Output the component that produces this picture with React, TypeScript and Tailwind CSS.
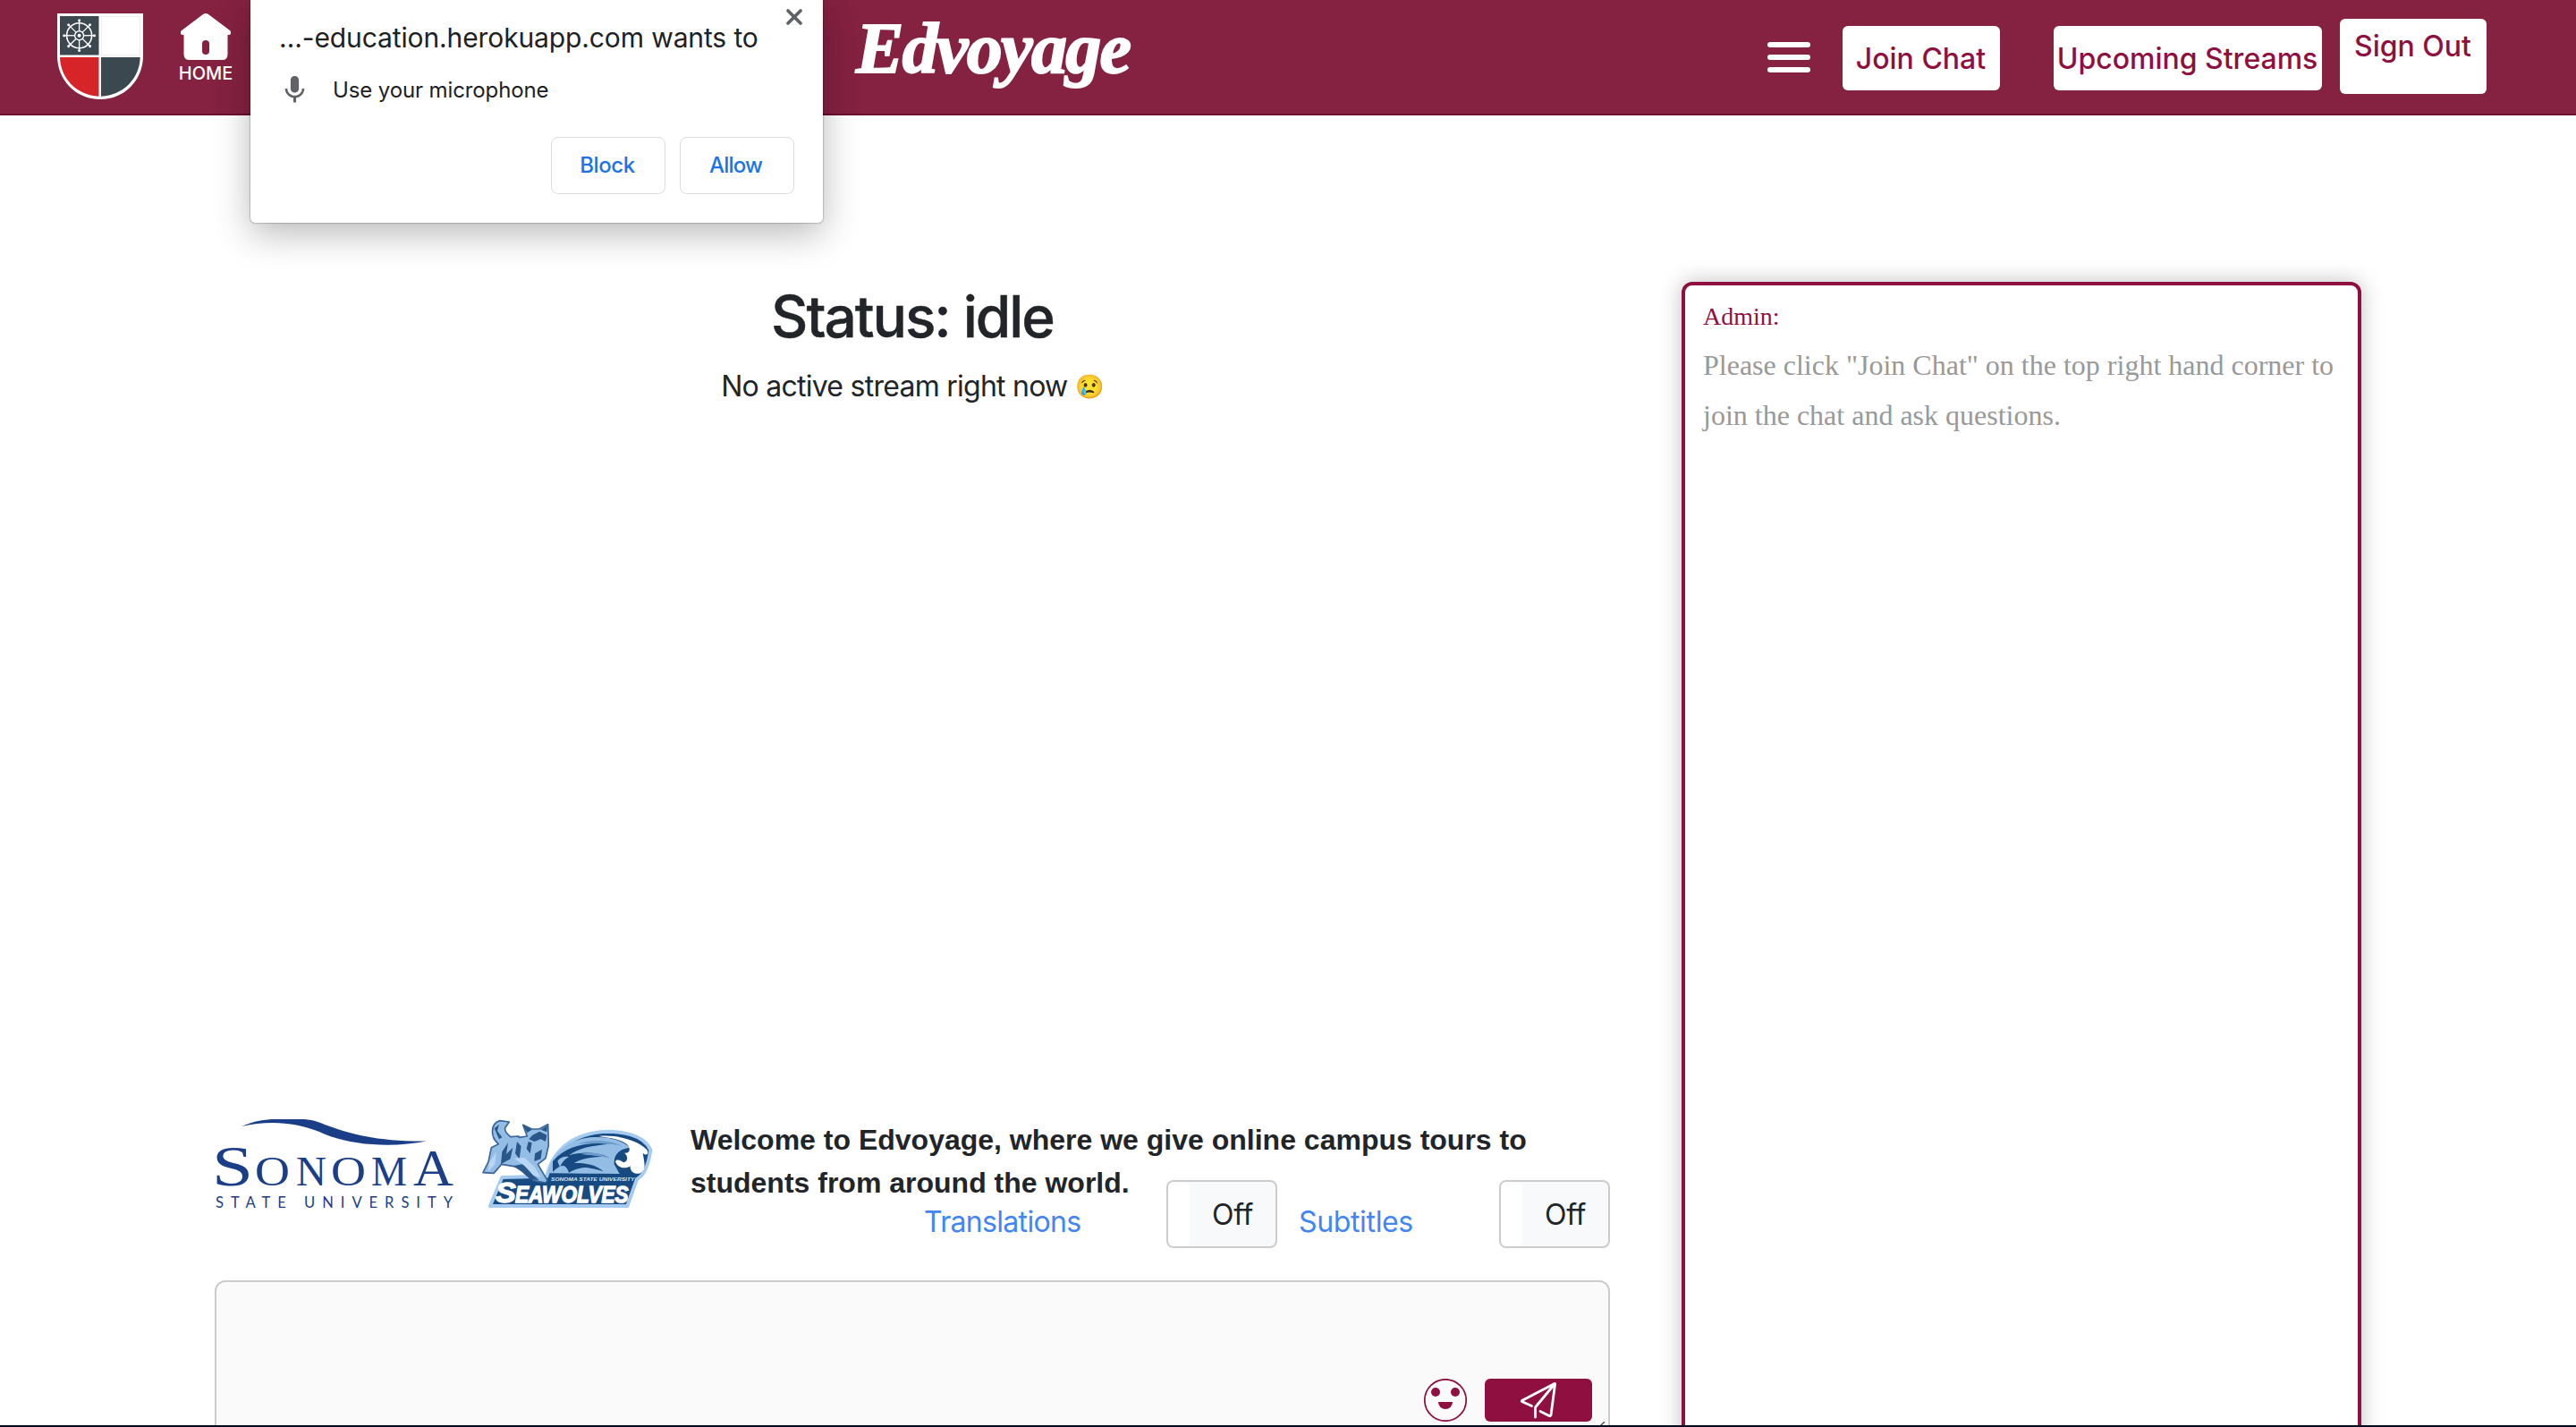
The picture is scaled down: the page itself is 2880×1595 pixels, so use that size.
import { X } from 'lucide-react';

function Shield() {
  const spokes = [0, 45, 90, 135, 180, 225, 270, 315];
  return (
    <svg className="mt-[15px] h-24 w-24 shrink-0" viewBox="64 15 96 96" role="img" aria-label="Edvoyage crest">
      <path d="M64 15H160V62C160 90 139 111 112 111C85 111 64 90 64 62Z" fill="#fff" />
      <rect x="67" y="18" width="43.5" height="43.5" fill="#3c4850" />
      <rect x="113.500" y="18.500" width="43" height="43" fill="none" stroke="#ececee" />
      <path d="M67 64H110.500V107.700C86 106.500 67.500 88 67 64Z" fill="#d62429" />
      <path d="M113 64H156.700C156.200 88 137.500 106.500 113 107.700Z" fill="#3c4850" />
      <g stroke="#fff" fill="none">
        <circle cx="88.600" cy="39.700" r="14" strokeWidth="1.600" />
        <circle cx="88.600" cy="39.700" r="5" strokeWidth="1.400" />
        {spokes.map((a) => (
          <g key={a} transform={`rotate(${a} 88.6 39.7)`}>
            <path d="M88.600 34.700V23" strokeWidth="1.300" />
            <circle cx="88.600" cy="22.800" r="1.500" fill="#fff" stroke="none" />
          </g>
        ))}
        <circle cx="88.600" cy="39.700" r="2" fill="#fff" stroke="none" />
      </g>
    </svg>
  );
}

function HomeIcon() {
  return (
    <svg className="h-[52px] w-[56px]" viewBox="202 15 56 52" aria-hidden="true">
      <path
        d="M227 16Q230 14 233 16L257.500 34.500Q258 35 258 36V37.500Q257.500 39 256 39H254.500V61Q254 67 249 67H211.500Q206 67 205.500 61V39H204Q202.500 39 202 37.500V36Q202 35 202.500 34.500Z"
        fill="#fff"
      />
      <rect x="226" y="45" width="8" height="16" rx="4" fill="#852141" />
    </svg>
  );
}

function PermissionPopup() {
  return (
    <div className="absolute left-[280px] top-0 z-10 h-[249px] w-[640px] rounded-b-[5px] bg-white pl-[31px] pr-8 pt-[22px] text-[#202124] shadow-[0_0_2px_rgba(0,0,0,0.6),0_12px_40px_rgba(0,0,0,0.28)]">
      <div className="ml-px whitespace-nowrap text-[30px] leading-10 tracking-[-0.12px]">…-education.herokuapp.com wants to</div>
      <div className="mt-[23px] flex h-8 items-center gap-[23px]">
        <svg className="-mt-px size-[37px]" viewBox="0 0 24 24" fill="#5f6368" aria-hidden="true">
          <path d="M12 14c1.660 0 2.990-1.340 2.990-3L15 5c0-1.660-1.340-3-3-3S9 3.340 9 5v6c0 1.660 1.340 3 3 3zm5.300-3c0 3-2.540 5.100-5.300 5.100S6.700 14 6.700 11H5c0 3.410 2.720 6.230 6 6.720V21h2v-3.280c3.280-.480 6-3.300 6-6.720h-1.700z" />
        </svg>
        <span className="ml-px text-2xl leading-8 tracking-[-0.12px]">Use your microphone</span>
      </div>
      <div className="mt-9 flex justify-end gap-4 text-2xl font-medium text-[#1a73e8]">
        <button className="h-16 w-32 rounded-lg border border-[#dadce0] pr-0.5 tracking-[-0.4px]">Block</button>
        <button className="h-16 w-32 rounded-lg border border-[#dadce0] pr-[3px] tracking-[-0.8px]">Allow</button>
      </div>
      <X className="absolute right-[18px] top-[5px] size-7 text-[#5f6368]" strokeWidth={3.2} />
    </div>
  );
}

function Header() {
  return (
    <header className="flex h-[129px] items-start border-b-2 border-[#6e0a30] bg-[#852141] pl-16 text-white">
      <Shield />
      <div className="ml-10 mt-[15px] flex w-[60px] flex-col items-center">
        <HomeIcon />
        <span className="mt-[3px] text-xl font-medium leading-6">HOME</span>
      </div>
      <h1 className="ml-[697px] mt-[14px] font-['Liberation_Serif',serif] text-[80px] font-bold italic leading-[80px] tracking-[-1.7px] [-webkit-text-stroke:2px_white]">
        Edvoyage
      </h1>
      <nav className="ml-auto mr-[100px] flex items-start text-[32px] font-medium text-[#8f1040]">
        <div className="mr-9 mt-[47px] flex flex-col gap-2">
          <span className="h-1.5 w-12 rounded-full bg-white" />
          <span className="h-1.5 w-12 rounded-full bg-white" />
          <span className="h-1.5 w-12 rounded-full bg-white" />
        </div>
        <button className="mt-[29px] h-[72px] w-44 rounded-md bg-white pr-px pt-0.5">Join Chat</button>
        <button className="ml-[60px] mt-[29px] h-[72px] w-[300px] whitespace-nowrap rounded-md bg-white pr-px pt-0.5">Upcoming Streams</button>
        <div className="ml-5 mt-[21px] h-[84px] w-[164px] rounded-md bg-white pr-px pt-[7px] text-center leading-[48px]">Sign Out</div>
      </nav>
    </header>
  );
}

function SonomaLogo() {
  return (
    <svg className="h-[102px] w-[268px] shrink-0 overflow-visible" viewBox="240 1250 268 102" fill="#1a3e87">
      <path d="M270 1259C284 1253 296 1251 308 1251H340C352 1252 358 1255 366 1258C398 1270 430 1276 477 1275.500C440 1283 390 1281 357 1265C330 1254 300 1252 270 1259Z" />
      <g className="font-['Liberation_Serif',serif]">
        <text x="237" y="1324.500" fontSize="64" textLength="46" lengthAdjust="spacingAndGlyphs">S</text>
        <text x="285" y="1324.500" fontSize="47" textLength="39" lengthAdjust="spacingAndGlyphs">O</text>
        <text x="331" y="1324.500" fontSize="47">N</text>
        <text x="370" y="1324.500" fontSize="47" textLength="39" lengthAdjust="spacingAndGlyphs">O</text>
        <text x="415" y="1324.500" fontSize="47" textLength="40" lengthAdjust="spacingAndGlyphs">M</text>
        <text x="462" y="1324.500" fontSize="58" textLength="45" lengthAdjust="spacingAndGlyphs">A</text>
      </g>
      <text x="241" y="1350" fontSize="16.500" textLength="265" className="font-[Lato,sans-serif]">
        STATE UNIVERSITY
      </text>
    </svg>
  );
}

function SeawolvesLogo() {
  return (
    <svg className="h-[104px] w-[200px] shrink-0 overflow-visible" viewBox="0 6 600 312">
      <g strokeLinejoin="round">
        <path d="M226 200C250 100 330 50 440 50C520 54 560 80 574 112C566 170 548 200 528 210L496 300H36L76 204Z" fill="#174a80" stroke="#a5cbf2" strokeWidth="12" />
        <path d="M230 190C245 120 300 78 370 70C430 64 480 80 505 104C470 108 450 126 452 160L470 192Z" fill="#94bde6" />
        <path d="M246 150C290 100 350 84 440 92C380 96 330 106 300 130C340 118 390 118 430 134C380 134 340 140 318 156C350 154 390 160 416 184C370 168 330 168 300 188C290 160 276 156 246 186Z" fill="#174a80" />
        <path d="M330 178C350 166 380 170 398 190H320ZM262 150C270 136 290 132 300 136C284 144 276 156 270 170Z" fill="#94bde6" />
        <path d="M330 92C380 74 440 80 476 98C440 90 380 88 330 92ZM340 126C370 118 410 122 440 140C400 132 370 130 340 126Z" fill="#6d9ccd" />
        <path d="M400 66C450 60 530 76 562 112C570 124 560 134 548 122C552 150 562 176 540 190C520 196 504 184 506 166C490 178 462 172 456 150C464 140 476 150 484 154C500 150 498 130 486 122C500 124 510 116 498 96C478 76 440 72 400 66Z" fill="#fff" />
        <path d="M64 92C36 70 36 24 68 14L100 18L90 32C78 44 94 60 104 68L132 66V70L160 66L146 28L176 42H200L230 26L232 96L222 140L196 160L228 214L222 222L180 214L150 172L110 166L74 160L48 190L12 188L30 152L40 104Z" fill="#94bde6" stroke="#3a6598" strokeWidth="5" />
        <path d="M178 62L202 50L226 62L222 84L206 76L184 84L166 76ZM146 28L176 44L160 54ZM206 44L228 30L226 52ZM164 84L176 88L170 124L158 108ZM76 118L96 88L90 126L112 104L104 142L72 160ZM126 84L140 100L134 142L120 124ZM186 124L210 110L206 142L184 150ZM112 166L150 158L176 192L200 214L170 210L140 184ZM50 40L66 26L60 48L76 70L66 76Z" fill="#2a5789" />
        <path d="M116 140L150 138L184 168L206 204L182 198L150 164ZM32 156L56 120L52 160L30 184Z" fill="#b9d7f4" />
      </g>
      <g className="font-['Liberation_Sans',sans-serif] font-bold italic" fill="#fff">
        <text x="240" y="217" fontSize="17" textLength="280" lengthAdjust="spacingAndGlyphs" fill="#d5e6f7">SONOMA STATE UNIVERSITY</text>
        <text x="54" y="289" fontSize="92" textLength="68" lengthAdjust="spacingAndGlyphs" stroke="#fff" strokeWidth="4">S</text>
        <text x="120" y="289" fontSize="78" textLength="380" lengthAdjust="spacingAndGlyphs" stroke="#fff" strokeWidth="4">EAWOLVES</text>
      </g>
    </svg>
  );
}

function Toggle() {
  return (
    <button className="flex h-[76px] w-[124px] overflow-hidden rounded-lg border-2 border-[#ccc] bg-[#f8f9fa] text-[32px] text-[#212529]">
      <span className="h-full w-6 rounded-r-md bg-white" />
      <span className="flex h-full flex-1 items-center justify-center pt-0.5 tracking-[-0.3px]">Off</span>
    </button>
  );
}

function MessageBox() {
  return (
    <div className="relative mt-9 flex h-[200px] items-start justify-end gap-5 rounded-xl border-2 border-[#ccc] bg-[#fafafa] pr-[18px] pt-[108px]">
      <svg className="size-12" viewBox="0 0 48 48" fill="#8f1040" aria-label="Emoji">
        <circle cx="24" cy="24" r="23.200" fill="none" stroke="#8f1040" strokeWidth="1.700" />
        <circle cx="13" cy="15" r="5" />
        <circle cx="35" cy="15" r="5" />
        <path d="M16 26H32A8 8 0 0 1 16 26Z" />
      </svg>
      <button className="flex h-12 w-[120px] items-start justify-center rounded-md bg-[#8f1040]" aria-label="Send">
        <svg className="h-12 w-12" viewBox="0 0 48 48" fill="none" stroke="#fff" strokeWidth="2.800" strokeLinecap="round" strokeLinejoin="round">
          <path d="M16.500 30.500L5.500 25.500Q5 25 5.500 24.500L42 5.500Q43 5.500 42.500 6.500L38 40.500Q37.500 42 36 41.500L26 36.500M42 6L20.500 32V43" />
        </svg>
      </button>
      <svg className="absolute right-[2px] top-[156px] h-2 w-2" viewBox="0 0 8 8" stroke="#555" strokeWidth="1.500">
        <path d="M0 6L6 0M4.500 6L6 4.500" />
      </svg>
    </div>
  );
}

export default function App() {
  return (
    <div className="relative flex h-[1595px] w-[2880px] flex-col overflow-hidden border-b-2 border-[#000b1e] bg-white font-[Inter,sans-serif] text-[#212529]">
      <PermissionPopup />
      <Header />
      <main className="flex min-h-0 flex-1 items-start gap-20 pl-60 pt-[186px]">
        <section className="flex w-[1560px] flex-col">
          <div className="h-[935px] text-center">
            <h2 className="text-[64px] font-medium leading-[78px] tracking-[-2.05px] [-webkit-text-stroke:0.4px_#212529]">Status: idle</h2>
            <p className="mt-[15px] text-[32px] leading-[48px] tracking-[-0.74px]">
              No active stream right now{' '}
              <span className="inline-block -translate-y-[2px] text-[26px] leading-none tracking-normal">😢</span>
            </p>
          </div>
          <div className="flex items-start">
            <SonomaLogo />
            <div className="ml-7">
              <SeawolvesLogo />
            </div>
            <p className="ml-9 h-24 w-[960px] font-['Liberation_Sans',sans-serif] text-[32px] font-bold leading-[48px]">
              Welcome to Edvoyage, where we give online campus tours to students from around the world.
            </p>
          </div>
          <div className="-mt-[35px] flex items-end justify-end text-[32px] leading-[48px] text-[#4285f4]">
            <span className="mb-[5px] w-[271px] tracking-[-0.68px]">Translations</span>
            <Toggle />
            <span className="mb-[5px] ml-6 w-[224px] tracking-[-0.35px]">Subtitles</span>
            <Toggle />
          </div>
          <MessageBox />
        </section>
        <aside className="h-[1400px] w-[760px] rounded-xl border-4 border-[#8f1040] bg-white px-5 pt-2.5 font-['Liberation_Serif',serif] shadow-[0_0_24px_rgba(0,0,0,0.25)]">
          <div className="text-[28px] leading-[50px] text-[#8f1040]">Admin:</div>
          <p className="mt-px text-[32px] leading-[56px] text-[#999]">
            Please click "Join Chat" on the top right hand corner to join the chat and ask questions.
          </p>
        </aside>
      </main>
    </div>
  );
}
